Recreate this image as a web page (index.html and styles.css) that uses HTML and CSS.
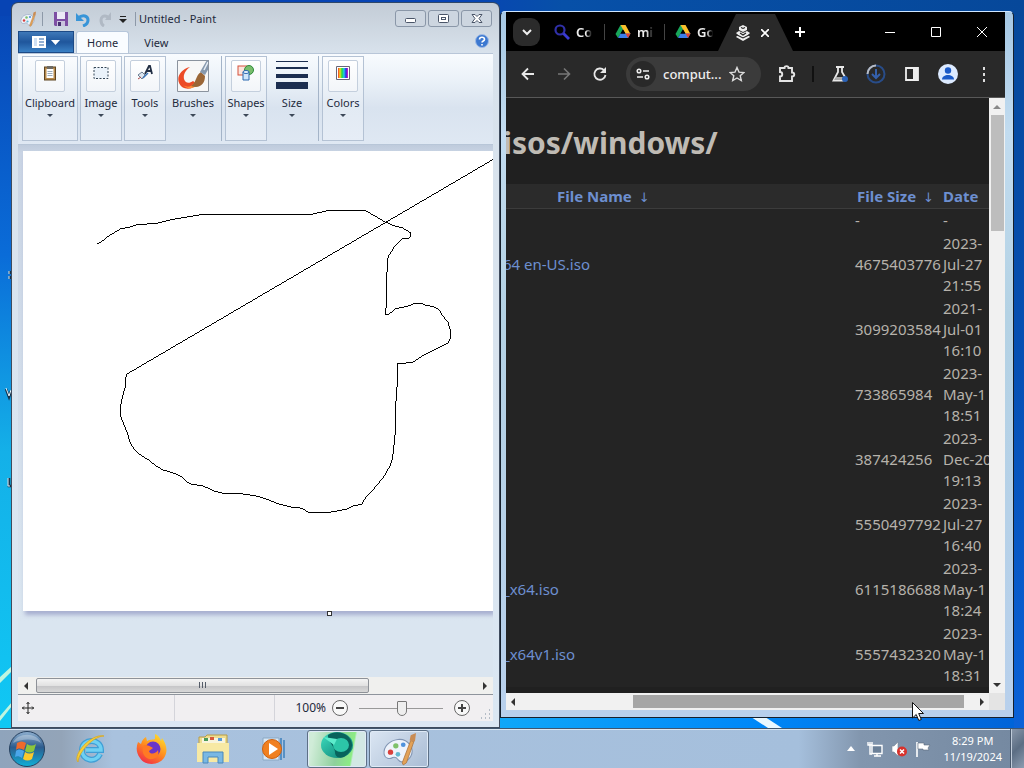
FILE: index.html
```html
<!DOCTYPE html>
<html lang="en">
<head>
<meta charset="utf-8">
<title>Desktop</title>
<link rel="stylesheet" href="styles.css">
</head>
<body>
<svg class="defs" aria-hidden="true">
  <defs>
    <linearGradient id="globe" x1="0" y1="0" x2="0" y2="1"><stop offset="0" stop-color="#8fb0d0"/><stop offset=".45" stop-color="#2d5c8e"/><stop offset="1" stop-color="#0fb0d8"/></linearGradient>
    <linearGradient id="fire" x1="0.8" y1="0" x2="0.2" y2="1"><stop offset="0" stop-color="#ffe02e"/><stop offset=".5" stop-color="#ff8a1e"/><stop offset="1" stop-color="#f0264c"/></linearGradient>
    <linearGradient id="teal" x1="0" y1="0" x2="1" y2="1"><stop offset="0" stop-color="#3fe0c0"/><stop offset="1" stop-color="#0a7a70"/></linearGradient>
    <linearGradient id="spectrum"><stop offset="0" stop-color="#f0302c"/><stop offset=".2" stop-color="#f6e11c"/><stop offset=".4" stop-color="#20d840"/><stop offset=".6" stop-color="#20c8f0"/><stop offset=".8" stop-color="#3028e0"/><stop offset="1" stop-color="#e020c0"/></linearGradient>
    <symbol id="drive" viewBox="0 0 16 16">
      <path d="M5.500 1h5L8 5.500 3 14 .5 10z" fill="#18a65a"/><path d="M5.500 1h5l5 9h-5z" fill="#fbc02d"/><path d="M3 14l2.500-4.500h10L13 14z" fill="#3b7de8"/><path d="M13 14l-2.500-4.500h5z" fill="#e2442f"/><path d="M8 5.500L5.500 9.500h5z" fill="#000"/>
    </symbol>
    <symbol id="palette" viewBox="0 0 32 32">
      <path d="M15 7C7 8 1 14 2 21c1 4 5 5 8 3 3-1 4 0 5 2 3 4 9 2 12-3 4-7-2-17-12-16z" fill="#eef3fb" stroke="#8296b4"/>
      <circle cx="8" cy="19" r="2.500" fill="#d9403c"/><circle cx="13" cy="13" r="2.500" fill="#7fc16a"/><circle cx="20" cy="12" r="2.200" fill="#4f92dc"/><circle cx="15" cy="21" r="2.200" fill="#62b8d0"/>
      <path d="M19 29L27 8l3 1-7 20-3 2z" fill="#e3a257" stroke="#a8703a" stroke-width=".7"/><path d="M26 8l1-5 5-2-1 8z" fill="#c98c54"/>
    </symbol>
  </defs>
</svg>
<div class="desktop">
  <main class="desk">
    <svg class="wall" viewBox="0 0 1024 728" preserveAspectRatio="none" aria-hidden="true">
      <path d="M0 677l12-11v5L0 683zM0 716l12-14v4L0 721z" fill="#bff5e0"/>
      <path d="M748 715h14l20 13h-14z" fill="#eaf8ff"/>
      <path d="M10 271v3M10 276v3M6 389l3 8 2-6M9 478v8h2" fill="none" stroke="#16344c" stroke-width="2.500"/><path d="M9 271v3M9 276v3M6 388l3 8 2-6M8 478v8h2" fill="none" stroke="#e4f4ff"/>
    </svg>

    <section class="window paint" aria-label="Paint">
      <header class="p-title">
        <svg class="i16" viewBox="0 0 32 32"><use href="#palette"/></svg>
        <span class="p-sep"></span>
        <button class="plain save" aria-label="Save"><svg class="i16" viewBox="0 0 16 16"><path d="M1 1h14v14H2l-1-1z" fill="#7d4fa3"/><path d="M4 1h8v7H4z" fill="#eceaf6"/><path d="M4 10h8v5H4z" fill="#c9c4dd"/><path d="M5 11h3v4H5z" fill="#463070"/></svg></button>
        <button class="plain" aria-label="Undo"><svg class="i16" viewBox="0 0 16 16"><path d="M3 7c5-4 10-2 10 2 0 3-2 5-5 6" fill="none" stroke="#3895d8" stroke-width="3"/><path d="M1 2v8h8z" fill="#3895d8"/></svg></button>
        <button class="plain" aria-label="Redo"><svg class="i16" viewBox="0 0 16 16"><path d="M11 6C6 3 4 7 4 9c0 3 1 5 3 6" fill="none" stroke="#b0b9c4" stroke-width="3"/><path d="M14 1v8H8z" fill="#b0b9c4"/></svg></button>
        <button class="plain more" aria-label="Customize"><svg viewBox="0 0 8 8" width="8" height="8"><path d="M1 1h6v1H1zM0 4h8L4 8z" fill="#222"/></svg></button>
        <span class="p-sep"></span>
        <h1 class="p-name">Untitled - Paint</h1>
        <div class="p-ctl">
          <button aria-label="Minimize"><svg viewBox="0 0 14 12"><rect x="1.500" y="5.500" width="10" height="4" rx="1" fill="#fff" stroke="#4a5568"/></svg></button>
          <button aria-label="Restore"><svg viewBox="0 0 14 12"><rect x="1.500" y="1.500" width="10" height="8" rx="1" fill="#fff" stroke="#4a5568"/><rect x="4.500" y="4.500" width="4" height="2" fill="#fff" stroke="#4a5568"/></svg></button>
          <button aria-label="Close"><svg viewBox="0 0 14 12"><path d="M2 1.500h3l2 2 2-2h3L9 5.500l3 4H9l-2-2-2 2H2l3-4z" fill="#fff" stroke="#4a5568"/></svg></button>
        </div>
      </header>
      <nav class="p-tabs">
        <button class="file" aria-label="Paint menu"><svg viewBox="0 0 28 12" width="28" height="12"><path d="M0 0h14v12H0z" fill="#fff"/><path d="M7 3h5M7 6h5M7 9h5" stroke="#2a62a8"/><path d="M2 2h3v8H2z" fill="#cfe0f4"/><path d="M19 4h9l-4.500 5z" fill="#fff"/></svg></button>
        <button class="tab on">Home</button>
        <button class="tab">View</button>
        <button class="plain help" aria-label="Help"><svg viewBox="0 0 14 14" width="14" height="14"><circle cx="7" cy="7" r="6.500" fill="#3c78d0" stroke="#9fbbe6"/><path d="M4.500 5.500c0-3 5-3 5 0 0 1.500-2.500 1.500-2.500 3M7 10v1.500" fill="none" stroke="#fff" stroke-width="1.600"/></svg></button>
      </nav>
      <div class="ribbon">
        <button class="grp w56"><span class="ico"><svg class="i16" viewBox="0 0 16 16"><rect x="2.500" y="2" width="11" height="13" fill="#b78a4c" stroke="#5c4423"/><path d="M4.500 4h7v9h-7z" fill="#fff"/><path d="M5 1h6v3H5z" fill="#6e6a64"/><path d="M5.500 6.500h5M5.500 8.500h5M5.500 10.500h5" stroke="#9ab"/></svg></span><span>Clipboard</span><i></i></button>
        <button class="grp w42"><span class="ico"><svg class="i16" viewBox="0 0 16 16"><rect x="1" y="2.500" width="14" height="11" fill="#eaf2fa" stroke="#345" stroke-dasharray="2 1.500"/></svg></span><span>Image</span><i></i></button>
        <button class="grp w42"><span class="ico"><svg class="i16" viewBox="0 0 16 16"><path d="M8 9l4-8 1 0 2 8M9.500 6h5" fill="none" stroke="#222f44" stroke-width="1.800"/><path d="M1 10l4-3 3 3-3 4z" fill="#dce6f0" stroke="#6a7c90"/><path d="M6 13l5-5" stroke="#3a74b8" stroke-width="1.500"/><path d="M1 14l3-2" stroke="#a44"/></svg></span><span>Tools</span><i></i></button>
        <button class="grp w52 flat"><svg class="brush" viewBox="0 0 32 32"><path d="M0 0h32v32H0z" fill="#f7f7f7"/><path d="M13 7C1 10-2 21 5 27c5 3 11 2 15-3l-4-3c-4 3-8 2-9-2-1-5 2-9 6-12z" fill="#ec4a26"/><path d="M6 25c4 3 9 2 12-3l3 2c-4 5-10 6-15 1z" fill="#ff8f3a"/><path d="M24 12l4 4c0 8-5 13-14 10 6-4 4-10 10-14z" fill="#9b6636"/><path d="M23 12l7-12h2v8l-4 7z" fill="#8698ad"/><path d="M27 10l4-8" stroke="#e8eef5" stroke-width="1.500"/><path d="M.5.5h31v31H.5z" fill="none" stroke="#8b939e"/></svg><span>Brushes</span><i></i></button>
        <span class="r-sep"></span>
        <button class="grp w42"><span class="ico"><svg class="i16 big" viewBox="0 0 18 16"><rect x="1" y="1" width="9" height="9" fill="#fbe4dc" stroke="#d5503b"/><circle cx="12" cy="5" r="4.500" fill="#78bd6c" stroke="#2e8b3a"/><path d="M6 7h6v8H6z" fill="#cfe6fa" stroke="#2b68b0"/><ellipse cx="9" cy="7" rx="3" ry="1.500" fill="#eaf5ff" stroke="#2b68b0"/></svg></span><span>Shapes</span><i></i></button>
        <button class="grp w46 flat"><svg class="brush" viewBox="0 0 32 32"><path d="M0 1h32v1H0zM0 7h32v2H0zM0 14h32v4H0zM0 22h32v7H0z" fill="#1c2e50"/></svg><span>Size</span><i></i></button>
        <span class="r-sep"></span>
        <button class="grp w42"><span class="ico"><svg class="i16" viewBox="0 0 16 16"><path d="M1.500 1.500h13v13h-13z" fill="#fff" stroke="#667"/><path d="M3 3h10v10H3z" fill="url(#spectrum)"/></svg></span><span>Colors</span><i></i></button>
      </div>
      <div class="work">
        <svg class="canvas" viewBox="0 0 470 460" preserveAspectRatio="xMinYMin slice" role="img" aria-label="Drawing">
          <g transform="translate(57.500 -.5) scale(.33333)" fill="none" stroke="#000" stroke-width="3" shape-rendering="crispEdges">
            <path d="M49 278h6L68 270 84 257 102 246 120 235 150 229 167 223 232 218 270 208 360 193H687L738 181H856L915 215 939 225 966 232 989 246V258L985 264H967L955 276 939 292 935 301 923 317 919 370 916 493H922L947 474 978 468 1000 460H1027L1036 464 1061 469 1078 480 1087 497 1102 514 1111 543V558L1104 577 1093 583 1026 616 1000 634 968 639H952L951 690 946 760 945 840 940 890 936 925 930 943 912 976 880 1015 850 1048 844 1062 817 1066 798 1076 762 1083 735 1087H686L664 1073 632 1070 596 1061 550 1043 530 1037 484 1030H434L405 1023 364 1005 334 1002 320 994 303 979 280 968 247 958 225 945 204 928 182 915 167 903 154 886 147 870 141 848 129 820 121 798V762L127 735 135 707 137 672 1246 22"/>
          </g>
        </svg>
        <span class="handle"></span>
      </div>
      <div class="p-scroll"><b class="al"></b><span class="p-thumb"><svg viewBox="0 0 9 7" width="9" height="7"><path d="M1.500 0v6M4.500 0v6M7.500 0v6" stroke="#555c68"/></svg></span><b class="ar"></b></div>
      <footer class="status">
        <div class="cell c1"><svg viewBox="0 0 12 12" width="12" height="12"><path d="M6 0v12M0 6h12M4.500 2L6 .5 7.500 2M4.500 10L6 11.500 7.500 10M2 4.500L.5 6 2 7.500M10 4.500L11.500 6 10 7.500" fill="none" stroke="#222"/></svg></div>
        <div class="cell c2"></div>
        <div class="zoom">
          <span>100%</span>
          <button class="plain" aria-label="Zoom out"><svg viewBox="0 0 16 16" width="16" height="16"><circle cx="8" cy="8" r="7.500" fill="#f8f8f8" stroke="#666"/><path d="M4 8h8" stroke="#444" stroke-width="2"/></svg></button>
          <input type="range" min="0" max="100" value="51" aria-label="Zoom">
          <button class="plain" aria-label="Zoom in"><svg viewBox="0 0 16 16" width="16" height="16"><circle cx="8" cy="8" r="7.500" fill="#f8f8f8" stroke="#666"/><path d="M4 8h8M8 4v8" stroke="#444" stroke-width="2"/></svg></button>
        </div>
        <svg class="grip" viewBox="0 0 10 10" width="10" height="10"><path d="M8 0h1v2H8zM8 4h1v2H8zM4 4h1v2H4zM8 8h1v2H8zM4 8h1v2H4zM0 8h1v2H0z" fill="#b4bcc6"/></svg>
      </footer>
    </section>

    <section class="window chrome" aria-label="Browser">
      <header class="strip">
        <button class="pick" aria-label="Search tabs"><svg viewBox="0 0 10 8" width="10" height="8"><path d="M1 2l4 4 4-4" fill="none" stroke="#eee" stroke-width="2"/></svg></button>
        <button class="ctab"><svg class="i16" viewBox="0 0 16 16"><circle cx="6" cy="6" r="4.500" fill="none" stroke="#3030a8" stroke-width="2.200"/><path d="M9.500 9.500L15 15" stroke="#3a3ad0" stroke-width="2.800"/></svg><span>Co</span></button>
        <button class="ctab"><svg class="i16"><use href="#drive"/></svg><span>mi</span></button>
        <button class="ctab last"><svg class="i16"><use href="#drive"/></svg><span>Go</span></button>
        <div class="active"><svg class="i16" viewBox="0 0 16 16"><path d="M4 2l4-2 4 2v3L8 7 4 5zM1 8l3-2 4 2 4-2 3 2-2 2 2 2-7 4-7-4 2-2z" fill="#eee"/><path d="M6 2.500l2 1 2-1M2 10l6 3 6-3M5 8l3 2 3-2" fill="none" stroke="#222" stroke-width="1.100"/></svg><button class="plain" aria-label="Close tab"><svg viewBox="0 0 8 8" width="8" height="8"><path d="M0 0l8 8M8 0L0 8" stroke="#fff" stroke-width="1.700"/></svg></button></div>
        <button class="plain new" aria-label="New tab"><svg viewBox="0 0 10 10" width="10" height="10"><path d="M5 0v10M0 5h10" stroke="#fff" stroke-width="2"/></svg></button>
        <div class="c-ctl">
          <button class="plain" aria-label="Minimize"><svg viewBox="0 0 10 10" width="10" height="10"><path d="M0 5.500h10" stroke="#fff"/></svg></button>
          <button class="plain" aria-label="Maximize"><svg viewBox="0 0 10 10" width="10" height="10"><path d="M.5.5h9v9h-9z" fill="none" stroke="#fff"/></svg></button>
          <button class="plain" aria-label="Close"><svg viewBox="0 0 10 10" width="10" height="10"><path d="M0 0l10 10M10 0L0 10" stroke="#fff"/></svg></button>
        </div>
      </header>
      <div class="tools">
        <button class="plain" aria-label="Back"><svg class="i16" viewBox="0 0 16 16"><path d="M14 8H3M8 2.500L2.500 8 8 13.500" fill="none" stroke="#e8e8e8" stroke-width="1.800"/></svg></button>
        <button class="plain" aria-label="Forward"><svg class="i16" viewBox="0 0 16 16"><path d="M2 8h11M8 2.500L13.500 8 8 13.500" fill="none" stroke="#777" stroke-width="1.600"/></svg></button>
        <button class="plain" aria-label="Reload"><svg class="i16" viewBox="0 0 16 16"><path d="M13.500 9A5.600 5.600 0 1 1 12 4.200" fill="none" stroke="#e8e8e8" stroke-width="1.800"/><path d="M14 1v6H8z" fill="#e8e8e8"/></svg></button>
        <div class="omni">
          <span class="tune"><svg viewBox="0 0 14 12" width="14" height="12"><circle cx="3" cy="3" r="1.800" fill="none" stroke="#eee" stroke-width="1.500"/><circle cx="11" cy="9" r="1.800" fill="none" stroke="#eee" stroke-width="1.500"/><path d="M7 3h6M1 9h6" stroke="#eee" stroke-width="1.700"/></svg></span>
          <input class="url" type="text" value="comput..." aria-label="Address">
          <button class="plain" aria-label="Bookmark"><svg class="i16" viewBox="0 0 16 16"><path d="M8 1.500l2 4.600 4.900.4-3.700 3.200 1.100 4.800L8 12l-4.300 2.500 1.100-4.800L1.100 6.500 6 6.100z" fill="none" stroke="#ddd" stroke-width="1.400"/></svg></button>
        </div>
        <button class="plain" aria-label="Extensions"><svg viewBox="0 0 18 18" width="18" height="18"><path d="M2 3h4.500c0-2.500 4-2.500 4 0H14v4.500c3 0 3 4 0 4V16H2v-4.500c3 0 3-4.500 0-4.500z" fill="none" stroke="#e4e4e4" stroke-width="1.900"/></svg></button>
        <span class="t-sep"></span>
        <button class="plain" aria-label="Labs"><svg viewBox="0 0 18 18" width="18" height="18"><path d="M5 2h8M7 2v5L2.500 15.500h10M11 2v5l3 5" fill="none" stroke="#e8e8e8" stroke-width="1.800"/><path d="M5 12h7l-1 3H3z" fill="#aaa"/><circle cx="14" cy="14" r="3" fill="#2a62b8"/></svg></button>
        <button class="plain" aria-label="Downloads"><svg viewBox="0 0 20 20" width="20" height="20"><circle cx="10" cy="10" r="8.500" fill="none" stroke="#284c88" stroke-width="2"/><path d="M1.500 10A8.500 8.500 0 0 1 10 1.500" fill="none" stroke="#b8bcc4" stroke-width="2"/><path d="M10 5v9M6 10l4 4 4-4" fill="none" stroke="#3460ac" stroke-width="2"/></svg></button>
        <button class="plain" aria-label="Side panel"><svg class="i16" viewBox="0 0 16 16"><path d="M2 2h12v12H2z" fill="none" stroke="#eee" stroke-width="1.800"/><path d="M9 2h5v12H9z" fill="#eee"/></svg></button>
        <button class="plain" aria-label="Profile"><svg viewBox="0 0 20 20" width="20" height="20"><circle cx="10" cy="10" r="10" fill="#dceaff"/><circle cx="10" cy="6.500" r="3.200" fill="#1a5ac8"/><path d="M4 15.500c0-6 12-6 12 0z" fill="#1a5ac8"/></svg></button>
        <button class="plain" aria-label="Menu"><svg class="i16" viewBox="0 0 16 16"><path d="M7 1h2v3H7zM7 7h2v3H7zM7 13h2v3H7z" fill="#ddd"/></svg></button>
      </div>
      <div class="view">
        <article class="page">
          <h2>isos/windows/</h2>
          <table>
            <colgroup><col><col class="k2"><col class="k3"></colgroup>
            <thead><tr><th class="fn"><a href="#">File Name</a> <a href="#" class="dn">↓</a></th><th><a href="#">File Size</a> <a href="#" class="dn">↓</a></th><th><a href="#">Date</a></th></tr></thead>
            <tbody>
              <tr><td></td><td>-</td><td>-</td></tr>
              <tr><td><a href="#">64 en-US.iso</a></td><td>4675403776</td><td>2023-<br>Jul-27<br>21:55</td></tr>
              <tr><td></td><td>3099203584</td><td>2021-<br>Jul-01<br>16:10</td></tr>
              <tr><td></td><td>733865984</td><td>2023-<br>May-1<br>18:51</td></tr>
              <tr><td></td><td>387424256</td><td>2023-<br>Dec-20<br>19:13</td></tr>
              <tr><td></td><td>5550497792</td><td>2023-<br>Jul-27<br>16:40</td></tr>
              <tr><td><a href="#">_x64.iso</a></td><td>6115186688</td><td>2023-<br>May-1<br>18:24</td></tr>
              <tr><td><a href="#">_x64v1.iso</a></td><td>5557432320</td><td>2023-<br>May-1<br>18:31</td></tr>
            </tbody>
          </table>
        </article>
        <div class="vbar"><b class="au"></b><span class="v-thumb"></span><b class="ad"></b></div>
        <div class="hbar"><b class="al"></b><span class="h-thumb"></span><b class="ar"></b></div>
        <span class="corner"></span>
        <svg class="cursor" viewBox="0 0 12 20" width="12" height="20" aria-hidden="true"><path d="M.5.500v15.500l3.700-3.500 2.600 6 2.500-1-2.600-6h4.800z" fill="#fff" stroke="#111"/></svg>
      </div>
    </section>
  </main>

  <footer class="taskbar">
    <button class="start" aria-label="Start"><svg viewBox="0 0 38 38" width="38" height="38"><circle cx="19" cy="19" r="17.500" fill="url(#globe)" stroke="#27415f"/><path d="M9 13c3-2 6-2 9 0l-2 7c-3-2-6-2-8 0z" fill="#ee6a2c"/><path d="M19 14c3 2 6 2 9 0l-2 7c-3 2-6 2-9 0z" fill="#8cc63c"/><path d="M8 21c2-2 5-2 8 0l-2 7c-3-2-5-2-7-1z" fill="#4aa6ea"/><path d="M17 22c3 2 6 2 9 0l-2 7c-3 2-6 2-9 0z" fill="#fcc92c"/><path d="M5 13C9 2 29 2 33 13c-8-5-20-4-28 0z" fill="#fff" opacity=".3"/></svg></button>
    <button class="pin" aria-label="Internet Explorer"><svg viewBox="0 0 32 32" width="32" height="32"><path d="M25 21c-4 9-18 7-18-4C7 5 26 5 26 17H11" fill="none" stroke="#3f9fd6" stroke-width="6"/><path d="M25 21c-4 9-18 7-18-4C7 5 26 5 26 17H11" fill="none" stroke="#6fd0f2" stroke-width="3.500"/><path d="M3 29C-3 22 16 0 29 3c-10 0-25 15-26 26z" fill="#f5cf3a" stroke="#d9a820" stroke-width=".8"/></svg></button>
    <button class="pin" aria-label="Firefox"><svg viewBox="0 0 32 32" width="32" height="32"><path d="M2 9l3 2c1-4 3-6 5-7l1 4c3-2 6-1 8-2V1c3 1 5 4 6 7l1-3c5 7 6 14 2 20-6 8-19 8-24 0C0 20 0 14 2 9z" fill="url(#fire)"/><circle cx="17" cy="16" r="7.500" fill="#6a35c8"/><path d="M8 12c4 0 6 1 9 3l-4 3c1 4 7 3 9-1 2 7-4 10-9 9-6-2-8-9-5-14z" fill="#ff7a24"/></svg></button>
    <button class="pin" aria-label="Explorer"><svg viewBox="0 0 34 32" width="34" height="32"><path d="M3 4h6l2-2h20v26H3z" fill="#eedd90" stroke="#b89c44"/><path d="M6 5h23v6H6z" fill="#f8f4dc"/><path d="M8 5h4v3H8z" fill="#4a9a58"/><path d="M14 4h4v3h-4z" fill="#d85a3c"/><path d="M22 5h4v3h-4z" fill="#5a9ad8"/><path d="M1 10h32v19H1z" fill="#f7e9a4"/><path d="M7 30V19h20v11h-5v-6H12v6z" fill="#79b8e4" stroke="#4a88bc"/></svg></button>
    <button class="pin" aria-label="Media Player"><svg viewBox="0 0 30 28" width="30" height="28"><path d="M4 3h16v22H4z" fill="#d8e8f6" stroke="#8aa8c4"/><path d="M22 3v22M25 5v18" stroke="#3c80bc" stroke-width="1.500"/><circle cx="13" cy="14" r="9.500" fill="#f08020" stroke="#cc6010"/><path d="M10 8l9 6-9 6z" fill="#fff"/></svg></button>
    <button class="task green" aria-label="Teal app"><svg viewBox="0 0 36 32" width="36" height="32"><ellipse cx="18" cy="14" rx="16" ry="13" fill="url(#teal)"/><path d="M9 4c10-7 25 0 24 11-1 5-4 8-8 11-6 2-9-1-9-5 0-5-8-11-7-17z" fill="#08635c"/><ellipse cx="22" cy="14" rx="8" ry="7" fill="#2cc6a8"/><path d="M4 6l14 2-3 6z" fill="#5ceccc"/></svg></button>
    <button class="task" aria-label="Paint"><svg viewBox="0 0 32 32" width="34" height="34"><use href="#palette"/></svg></button>
    <div class="tray">
      <button class="plain" aria-label="Hidden icons"><svg viewBox="0 0 8 5" width="8" height="5"><path d="M0 5l4-5 4 5z" fill="#fff"/></svg></button>
      <button class="plain" aria-label="Network"><svg class="i16" viewBox="0 0 16 16"><path d="M5 4.500h10v8H5z" fill="#6b8098" stroke="#fff" stroke-width="1.400"/><path d="M7 15h7M10 13v2M1 1v3h4V1M3 1v12h2" fill="none" stroke="#fff" stroke-width="1.400"/></svg></button>
      <button class="plain" aria-label="Volume muted"><svg class="i16" viewBox="0 0 16 16"><path d="M1 5h2l4-4v14l-4-4H1z" fill="#fff" stroke="#7a8898" stroke-width=".6"/><circle cx="11" cy="10.500" r="5" fill="#d8322c"/><path d="M9 8.500l4 4M13 8.500l-4 4" stroke="#fff" stroke-width="1.500"/></svg></button>
      <button class="plain" aria-label="Action center"><svg class="i16" viewBox="0 0 16 16"><path d="M2 1v15" stroke="#fff" stroke-width="1.600"/><path d="M3 2h6v2h6l-2 3 1 2H8V8H3z" fill="#fff" stroke="#5a6878" stroke-width=".6"/></svg></button>
      <time class="clock"><span>8:29 PM</span><span>11/19/2024</span></time>
      <button class="show" aria-label="Show desktop"></button>
    </div>
  </footer>
</div>
</body>
</html>
```

FILE: styles.css
```css
* { box-sizing: border-box; }
body { margin: 0; font: 11px/16px "Noto Sans", "Open Sans", sans-serif; color: #1e2a3c; }
button { font: inherit; color: inherit; margin: 0; }
a { text-decoration: none; }
svg { display: block; flex: none; }
.defs { position: absolute; width: 0; height: 0; }
.i16 { width: 16px; height: 16px; }
.plain { display: flex; align-items: center; justify-content: center; padding: 0; border: 0; background: none; }

.desktop { display: flex; flex-direction: column; height: 100vh; overflow: hidden; }
.desk {
  position: relative; flex: 1; min-height: 0; display: grid;
  grid-template-columns: minmax(0, 489fr) minmax(0, 514fr); grid-template-rows: minmax(0, 1fr);
  padding: 2px 10px 0 11px;
  background:
    linear-gradient(90deg, #0744b4 0 45%, #0750a8 55%, #06489a) 0 0 / 100% 16px no-repeat,
    linear-gradient(#06489a, #0650b4 50%, #0a62d8) 100% 0 / 50% 100% no-repeat,
    linear-gradient(#0744b4, #0a6cd8 35%, #14b0e8 62%, #10c8f4);
}
.desk::after { content: ""; position: absolute; left: 48%; right: 1%; bottom: 0; height: 40px; background: linear-gradient(90deg, #10a8f8, #0088f8 50%, #0064d8); }
.wall { position: absolute; z-index: 1; left: 0; top: 0; width: 100%; height: 100%; }
.window { position: relative; z-index: 2; display: flex; flex-direction: column; min-width: 0; }

/* Paint */
.paint { padding: 0 6px 6px; border: 1px solid #3f4c5e; border-top-color: #2f4768; border-radius: 7px 7px 0 0; background: linear-gradient(#c3ccd6, #d8e2ec 50px, #dbe7f3); }
.p-title { display: flex; align-items: center; gap: 6px; height: 28px; padding: 3px 1px 0 2px; }
.p-sep { width: 1px; height: 14px; background: #8d99a8; }
.save { margin-left: 4px; }
.more { margin: 0 2px 0 0; }
.p-name { margin: 0 0 0 -3px; font-size: 11px; font-weight: 400; flex: 1; }
.p-ctl { display: flex; gap: 2px; }
.p-ctl button { width: 31px; height: 17px; padding: 0; border: 1px solid #8a97a8; border-radius: 3px; background: #cdd6e0; display: flex; align-items: center; justify-content: center; }
.p-ctl svg { width: 14px; height: 12px; }
.p-tabs { display: flex; height: 22px; align-items: stretch; }
.file { width: 56px; padding: 0; border: 1px solid #1d4a86; display: flex; align-items: center; justify-content: center; background: linear-gradient(#3f78b8, #1f569c 50%, #3a80c4); }
.tab { border: 1px solid transparent; border-bottom: 0; background: none; padding: 0 14px; }
.tab.on { background: #f9fcff; border-color: #b6c6da; margin-left: 2px; padding: 0 10px; border-radius: 3px 3px 0 0; }
.help { margin: 0 4px 0 auto; height: 20px; }
.ribbon { display: flex; gap: 2px; height: 92px; padding: 2px 4px 3px; border: solid #b8c6d8; border-width: 1px 0; background: linear-gradient(#f8fbfe, #eaf1f8 30%, #d9e3ef 60%, #dfe8f3); }
.grp { display: flex; flex-direction: column; align-items: center; padding: 3px 0 0; border: 1px solid #b4c2d4; background: linear-gradient(#fafcfe, #e2eaf3 60%, #e6edf6); white-space: nowrap; }
.grp > span:nth-child(2) { margin: 3px -2px 0; }
.grp.flat { border-color: transparent; background: none; }
.grp i { margin-top: 3px; border: 3px solid transparent; border-top-color: #3c4858; border-bottom: 0; }
.w42 { width: 42px; } .w46 { width: 46px; } .w52 { width: 50px; } .w56 { width: 56px; }
.ico { display: flex; justify-content: center; align-items: center; width: 30px; height: 32px; padding-bottom: 6px; border: 1px solid #c4cfdd; border-radius: 2px; background: linear-gradient(#fff, #f2f5f9); }
.ico .big { width: 18px; }
.brush { width: 32px; height: 32px; }
.r-sep { width: 1px; margin: 0 1px; background: #a4b4c8; }
.work { position: relative; flex: 1; min-height: 0; padding: 6px 0 66px 5px; background: linear-gradient(#bfcbdc, #c9d4e4 8px, #dae5f0 90%); }
.canvas { width: 100%; height: 100%; background: #fff; box-shadow: 2px 4px 4px #a8b0d0; clip-path: inset(0 0 -10px -2px); }
.handle { position: absolute; left: 65%; bottom: 61px; width: 5px; height: 5px; border: 1px solid #333; background: #fff; }
.p-scroll { display: flex; align-items: center; gap: 8px; height: 17px; padding: 1px 6px; background: #f0f0ee; }
.p-thumb { width: 72%; height: 15px; margin: 0 auto 0 0; border: 1px solid #8e9298; border-radius: 2px; background: linear-gradient(#f4f4f4, #e2e2e2 50%, #c6c6c8 55%, #d8d8d8); display: flex; align-items: center; justify-content: center; }
b { width: 0; height: 0; border: 4px solid transparent; flex: none; }
.al { border-right-color: #333; border-left: 0; }
.ar { border-left-color: #333; border-right: 0; }
.au { border-bottom-color: #888; border-top: 0; }
.ad { border-top-color: #333; border-bottom: 0; }
.status { display: flex; align-items: stretch; height: 27px; border-top: 1px solid #8e949c; background: #f1eff1; }
.cell { display: flex; align-items: center; padding-left: 4px; border-right: 1px solid #d4d4da; }
.c1 { width: 33%; } .c2 { width: 21%; }
.zoom { display: flex; align-items: center; flex: 1; justify-content: flex-end; gap: 6px; font-size: 12px; }
.zoom input { appearance: none; width: 84px; height: 18px; margin: 0 5px; background: linear-gradient(#999, #999) center / 84px 1px no-repeat; }
.zoom input::-webkit-slider-thumb { appearance: none; width: 10px; height: 15px; border: 1px solid #777; border-radius: 1px 1px 5px 5px; background: #eee; }
.grip { align-self: flex-end; margin: 0 2px 2px 11px; }

/* Browser */
.chrome { margin: 9px 0 10px; padding: 0 8px 7px 5px; border: 1px solid #16202c; border-top-color: #cfe6ff; border-radius: 5px 5px 0 0; background: linear-gradient(#a6c8e4, #c2dcf0 120px, #b4d2e4 300px, #b8d0ec); }
.strip { display: flex; align-items: center; height: 39px; background: #000; color: #eee; padding-left: 7px; font-size: 13px; font-weight: 600; }
.pick { width: 27px; height: 28px; padding: 0; border: 0; border-radius: 9px; background: #2b2b2b; display: flex; align-items: center; justify-content: center; }
.ctab { display: flex; align-items: center; gap: 6px; width: 60px; height: 16px; padding: 0 8px 0 10px; border: 0; border-right: 1px solid #444; background: none; overflow: hidden; }
.ctab:nth-child(2) { width: 65px; padding-left: 14px; }
.ctab span { width: 16px; overflow: hidden; flex: none; text-align: left; -webkit-mask: linear-gradient(90deg, #000 60%, transparent); }
.ctab.last { border: 0; width: 53px; padding-right: 0; }
.active { display: flex; align-items: center; gap: 10px; align-self: flex-end; width: 75px; height: 37px; padding-left: 17px; background: #292929; clip-path: polygon(24% 0, 76% 0, 100% 100%, 0 100%); }
.new { margin-left: 2px; width: 10px; }
.c-ctl { display: flex; margin-left: auto; }
.c-ctl button { width: 46px; height: 36px; }
.tools { display: flex; align-items: center; height: 47px; padding: 0 3px 0 4px; background: #292929; border-bottom: 1px solid #585858; }
.tools > .plain { width: 36px; height: 36px; }
.omni { flex: 1; min-width: 0; display: flex; align-items: center; gap: 7px; height: 34px; margin: 0 8px; padding: 0 16px 0 4px; border-radius: 17px; background: #3b3b3b; }
.tune { display: flex; align-items: center; justify-content: center; width: 26px; height: 26px; border-radius: 13px; background: #292929; flex: none; }
.url { flex: 1; width: 0; min-width: 0; padding: 0; border: 0; background: none; color: #eee; font: 13px/18px "Noto Sans", sans-serif; font-weight: 500; }
.t-sep { width: 2px; height: 16px; margin: 0 8px 0 7px; background: #111; }
.view { position: relative; flex: 1; min-height: 0; display: grid; grid-template-columns: minmax(0, 1fr) 16px; grid-template-rows: minmax(0, 1fr) 17px; background: #f1f1f1; }
.page { overflow: hidden; background: #202020; color: #b6b2ab; font-size: 15px; line-height: 21px; }
.page h2 { margin: 0 0 0 -3px; padding: 24px 0 20px; font-size: 30px; line-height: 42px; color: #bfbbb4; }
.page table { table-layout: fixed; width: calc(100% + 22px); margin-left: -3px; border-collapse: separate; border-spacing: 0; background: #242424; white-space: nowrap; }
.k2 { width: 88px; } .k3 { width: 65px; }
.page th { padding: 2px 0 1px 2px; text-align: left; background: #2b2b2b; border-bottom: 1px solid #3c3c3c; }
.page th:last-child { padding-left: 0; }
.page th.fn { padding-left: 54px; }
.page td { padding: 1px 0; vertical-align: middle; }
.page a { color: #6d8fd0; }
.page .dn { margin-left: 3px; font: 13px/13px "DejaVu Sans", sans-serif; }
.vbar { display: flex; flex-direction: column; align-items: center; padding: 7px 0 6px; }
.v-thumb { width: 13px; height: 20%; margin: 6px 0 auto; background: #bdbdbd; }
.hbar { display: flex; align-items: center; padding: 0 5px; }
.h-thumb { width: 70%; height: 13px; margin: 0 16px 0 auto; background: #a6a6a6; }
.corner { background: #e4e4e4; }
.cursor { position: absolute; right: 81px; bottom: -12px; }

/* Taskbar */
.taskbar { display: flex; align-items: center; height: 40px; border-top: 1px solid #40566e; box-shadow: inset 0 1px #dce8f4; background: linear-gradient(90deg, #8fa4bc, #93a4b8 6%, #a9c2de 11%, #a5bfdc 78%, #8296ae 84%, #7488a0); }
.taskbar button { display: flex; align-items: center; justify-content: center; padding: 0; border: 0; background: none; }
.pin { width: 61px; height: 38px; }
.taskbar .start { width: 60px; padding-right: 6px; }
.taskbar .task { width: 60px; height: 38px; margin-right: 2px; border: 1px solid #5d7086; border-radius: 3px; box-shadow: inset 0 0 0 1px #dfeaf6; background: linear-gradient(135deg, #dbe6f3, #a9bcd4); }
.taskbar .green { background: linear-gradient(100deg, #d0ecd8 10%, #8ed09c 50%, #8cec84 74%, #d2e8e4 77%); margin-left: 3px; }
.taskbar .green svg { margin-bottom: 4px; }
.tray { display: flex; align-items: center; align-self: stretch; margin-left: auto; }
.tray .plain { width: 24px; height: 38px; }
.clock { display: flex; flex-direction: column; align-items: center; margin: 0 8px; color: #fff; }
.tray .show { width: 14px; align-self: stretch; border-left: 1px solid #48586c; box-shadow: inset 1px 0 #c0ccda; background: linear-gradient(135deg, #8a98aa, #5c6e84 50%, #8c9cb0); }
```
